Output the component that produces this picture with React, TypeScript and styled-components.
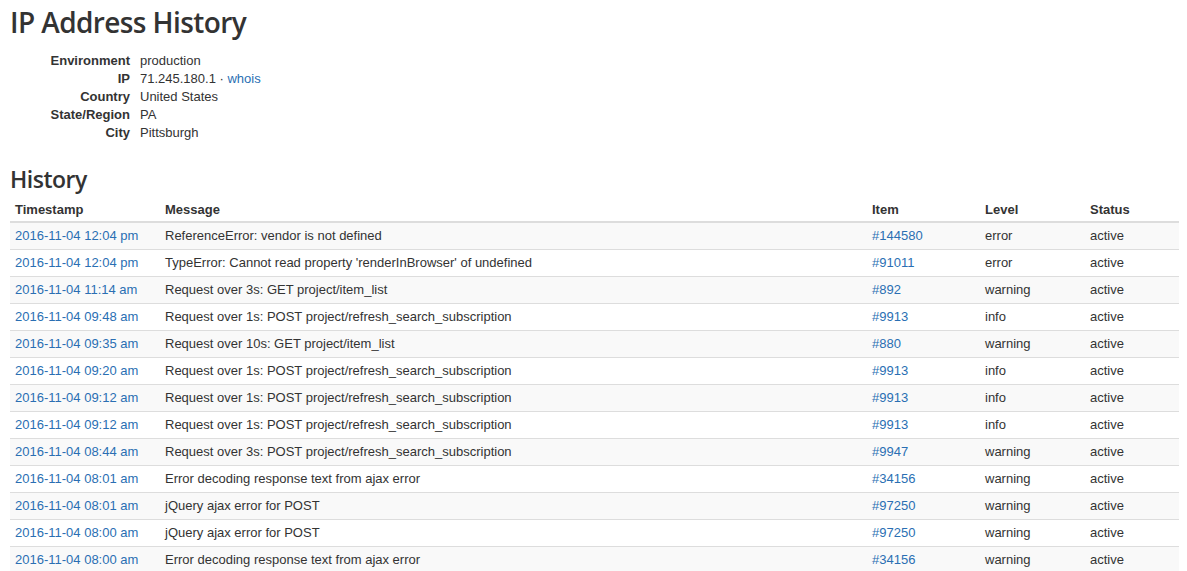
import React from "react";
import styled, { createGlobalStyle } from "styled-components";

const Global = createGlobalStyle`
  html, body { margin: 0; padding: 0; background: #fff; }
  body { font-family: "Liberation Sans", Arial, sans-serif; font-size: 13px; color: #333; }
`;

const Page = styled.div`
  padding: 0 8px 0 10px;
`;

const Title = styled.h1`
  font-family: "Open Sans", "Noto Sans", sans-serif;
  font-weight: 600;
  font-size: 28px;
  line-height: 36px;
  letter-spacing: -0.6px;
  color: #333;
  margin: 4px 0 12px;
`;

const SubTitle = styled.h2`
  font-family: "Open Sans", "Noto Sans", sans-serif;
  font-weight: 600;
  font-size: 23px;
  line-height: 28px;
  letter-spacing: -0.5px;
  color: #333;
  margin: 0 0 6px;
`;

const Details = styled.dl`
  display: grid;
  grid-template-columns: 120px auto;
  column-gap: 10px;
  margin: 0 0 23px;
  line-height: 18px;
  dt { font-weight: bold; text-align: right; margin: 0; }
  dd { margin: 0; }
`;

const Link = styled.a`
  color: #2a6fb3;
  text-decoration: none;
`;

const Table = styled.table`
  width: 1169px;
  table-layout: fixed;
  border-collapse: collapse;
  border-spacing: 0;
`;

const Th = styled.th<{ w: number }>`
  box-sizing: border-box;
  width: ${(p) => p.w}px;
  text-align: left;
  font-weight: bold;
  padding: 2px 5px 2px;
  line-height: 18px;
  border-bottom: 2px solid #ddd;
`;

const Row = styled.tr`
  &:nth-child(odd) { background: #f9f9f9; }
`;

const Td = styled.td`
  padding: 4px 5px;
  line-height: 18px;
  border-top: 1px solid #ddd;
  white-space: nowrap;
`;

const rows: [string, string, string, string][] = [
  ["2016-11-04 12:04 pm", "ReferenceError: vendor is not defined", "#144580", "error"],
  ["2016-11-04 12:04 pm", "TypeError: Cannot read property 'renderInBrowser' of undefined", "#91011", "error"],
  ["2016-11-04 11:14 am", "Request over 3s: GET project/item_list", "#892", "warning"],
  ["2016-11-04 09:48 am", "Request over 1s: POST project/refresh_search_subscription", "#9913", "info"],
  ["2016-11-04 09:35 am", "Request over 10s: GET project/item_list", "#880", "warning"],
  ["2016-11-04 09:20 am", "Request over 1s: POST project/refresh_search_subscription", "#9913", "info"],
  ["2016-11-04 09:12 am", "Request over 1s: POST project/refresh_search_subscription", "#9913", "info"],
  ["2016-11-04 09:12 am", "Request over 1s: POST project/refresh_search_subscription", "#9913", "info"],
  ["2016-11-04 08:44 am", "Request over 3s: POST project/refresh_search_subscription", "#9947", "warning"],
  ["2016-11-04 08:01 am", "Error decoding response text from ajax error", "#34156", "warning"],
  ["2016-11-04 08:01 am", "jQuery ajax error for POST", "#97250", "warning"],
  ["2016-11-04 08:00 am", "jQuery ajax error for POST", "#97250", "warning"],
  ["2016-11-04 08:00 am", "Error decoding response text from ajax error", "#34156", "warning"],
];

export default function App() {
  return (
    <>
      <Global />
      <Page>
        <Title>IP Address History</Title>
        <Details>
          <dt>Environment</dt>
          <dd>production</dd>
          <dt>IP</dt>
          <dd>
            71.245.180.1 · <Link href="#">whois</Link>
          </dd>
          <dt>Country</dt>
          <dd>United States</dd>
          <dt>State/Region</dt>
          <dd>PA</dd>
          <dt>City</dt>
          <dd>Pittsburgh</dd>
        </Details>
        <SubTitle>History</SubTitle>
        <Table>
          <thead>
            <tr>
              <Th w={150}>Timestamp</Th>
              <Th w={707}>Message</Th>
              <Th w={113}>Item</Th>
              <Th w={105}>Level</Th>
              <Th w={94}>Status</Th>
            </tr>
          </thead>
          <tbody>
            {rows.map((r, i) => (
              <Row key={i}>
                <Td>
                  <Link href="#">{r[0]}</Link>
                </Td>
                <Td>{r[1]}</Td>
                <Td>
                  <Link href="#">{r[2]}</Link>
                </Td>
                <Td>{r[3]}</Td>
                <Td>active</Td>
              </Row>
            ))}
          </tbody>
        </Table>
      </Page>
    </>
  );
}
